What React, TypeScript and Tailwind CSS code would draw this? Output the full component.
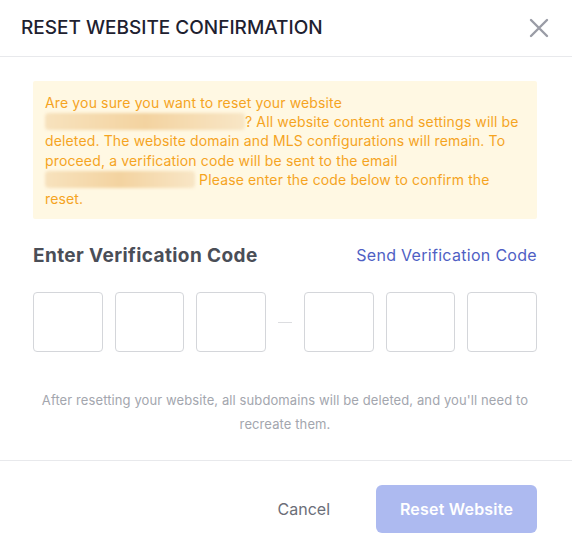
import { useState } from 'react';

function BlurBlock({ width }: { width: number }) {
  return (
    <span
      className="inline-block h-[17px] align-[-3px] rounded-sm bg-gradient-to-r from-[#f7e2bd] via-[#f3d3a0] to-[#f8e6c6] blur-[1.5px]"
      style={{ width }}
    />
  );
}

export default function App() {
  const [code, setCode] = useState(['', '', '', '', '', '']);

  const setDigit = (i: number, v: string) => {
    const next = [...code];
    next[i] = v.slice(-1);
    setCode(next);
  };

  const box = (i: number) => (
    <input
      key={i}
      value={code[i]}
      onChange={(e) => setDigit(i, e.target.value)}
      className="h-[60px] w-0 flex-1 rounded-[4px] border border-[#d4d6da] bg-white text-center text-xl text-[#333] outline-none"
    />
  );

  return (
    <div className="w-[572px] h-[552px] bg-white font-['Inter',sans-serif] flex flex-col">
      {/* Header */}
      <div className="h-[57px] flex items-center justify-between pl-[21px] pr-[23px] border-b border-[#e8e9ec]">
        <h2 className="text-[19px] font-medium text-[#1e2130]">RESET WEBSITE CONFIRMATION</h2>
        <button className="text-[#9a9ca6]">
          <svg width="20" height="20" viewBox="0 0 20 20" fill="none" stroke="currentColor" strokeWidth="2.4" strokeLinecap="round">
            <path d="M2 2L18 18M18 2L2 18" />
          </svg>
        </button>
      </div>

      {/* Body */}
      <div className="pl-[33px] pr-[35px] pt-6 pb-6 border-b border-[#e8e9ec]">
        <div className="bg-[#fff8e3] rounded-[2px] pl-3 pr-2 pt-3 pb-[11px] text-[14px] leading-[19.2px] tracking-[0.14px] text-[#f5a41f]">
          Are you sure you want to reset your website
          <br />
          <BlurBlock width={200} />? All website content and settings will be
          <br />
          deleted. The website domain and MLS configurations will remain. To
          <br />
          proceed, a verification code will be sent to the email
          <br />
          <BlurBlock width={150} /> Please enter the code below to confirm the
          <br />
          reset.
        </div>

        <div className="mt-6 flex items-center justify-between h-6">
          <h3 className="text-[19px] font-bold tracking-[0.4px] text-[#4a4e57] translate-y-px">Enter Verification Code</h3>
          <button className="text-[16px] tracking-[0.3px] text-[#4f5fc4]">Send Verification Code</button>
        </div>

        <div className="mt-[25px] flex items-center gap-3">
          {box(0)}
          {box(1)}
          {box(2)}
          <div className="w-[14px] h-px bg-[#dcdde0]" />
          {box(3)}
          {box(4)}
          {box(5)}
        </div>

        <p className="mt-9 text-center text-[13px] leading-6 tracking-[0.1px] text-[#a3a6ae]">
          After resetting your website, all subdomains will be deleted, and you'll need to recreate them.
        </p>
      </div>

      {/* Footer */}
      <div className="flex items-center justify-end gap-[46px] pt-6 pr-[35px]">
        <button className="text-[16px] text-[#6b6e78]">Cancel</button>
        <button className="w-[161px] h-12 rounded-md bg-[#adbaf0] text-white text-[16px] font-semibold tracking-[0.2px]">
          Reset Website
        </button>
      </div>
    </div>
  );
}
